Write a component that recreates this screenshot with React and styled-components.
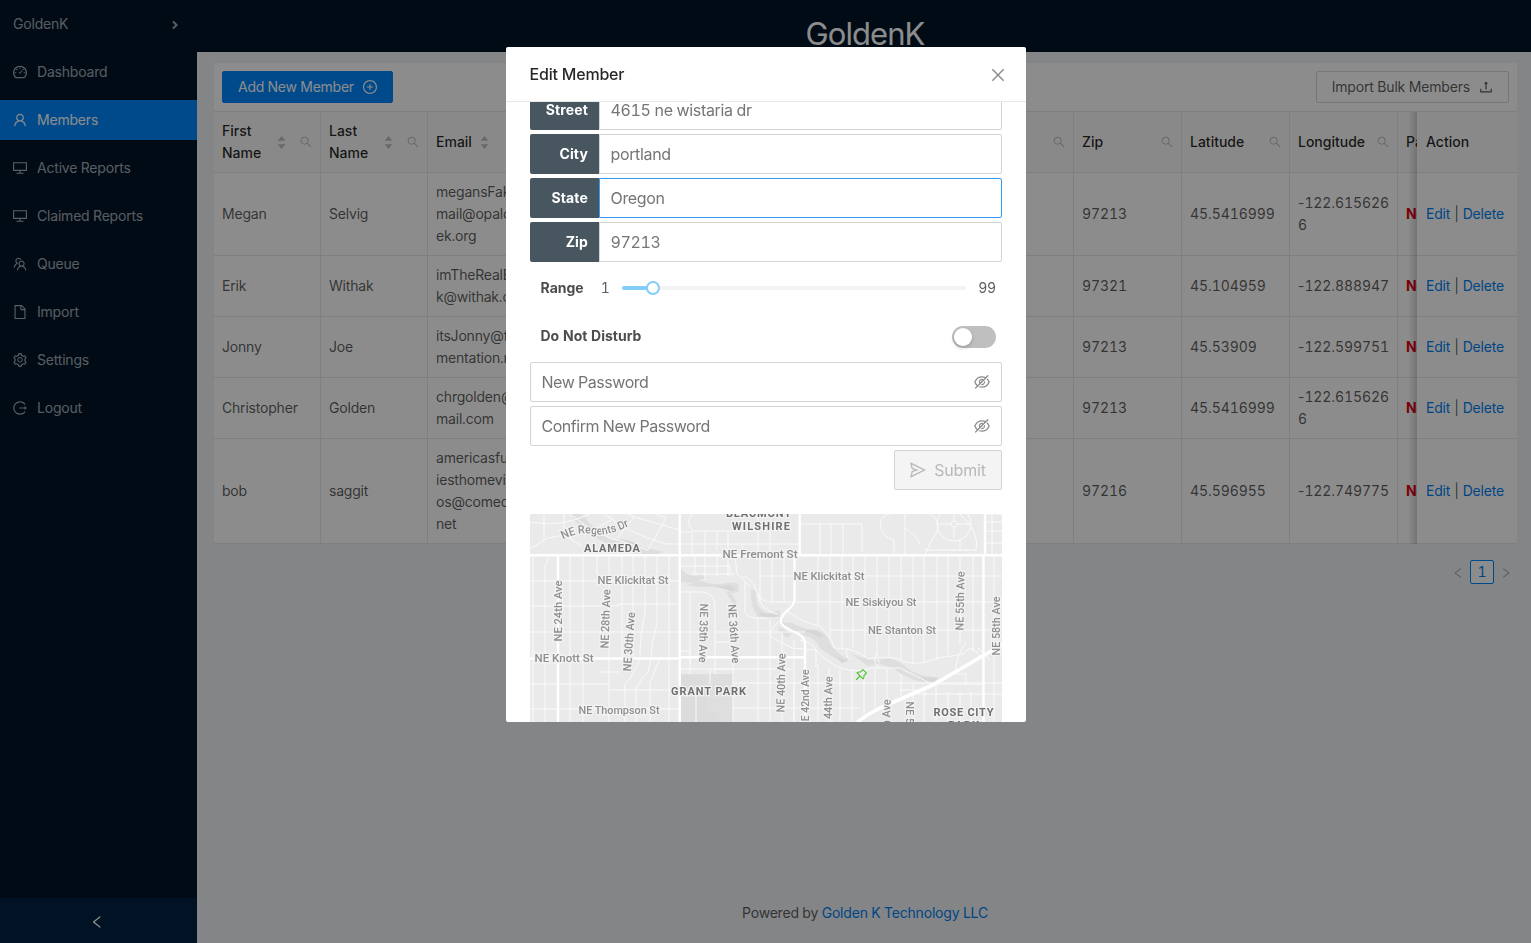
import React from 'react';
import styled, { createGlobalStyle, css } from 'styled-components';
import * as Ai from 'react-icons/ai';

const Global = createGlobalStyle`
  *, *::before, *::after { box-sizing: border-box; }
  body {
    margin: 0;
    font-family: Inter, "Liberation Sans", sans-serif;
    font-size: 14px;
    line-height: 22px;
    letter-spacing: -0.2px;
    color: rgba(0, 0, 0, 0.65);
    font-feature-settings: "tnum";
    overflow: hidden;
  }
  svg { display: block; flex: none; }
`;

/* The glyphs carry a 64 unit margin; crop it so they fill their box. */
const tight = (Glyph) => (props) => <Glyph viewBox="64 64 896 896" {...props} />;

const DashboardIcon = tight(Ai.AiOutlineDashboard);
const UserIcon = tight(Ai.AiOutlineUser);
const DesktopIcon = tight(Ai.AiOutlineDesktop);
const TeamIcon = tight(Ai.AiOutlineTeam);
const FileIcon = tight(Ai.AiOutlineFile);
const SettingIcon = tight(Ai.AiOutlineSetting);
const LogoutIcon = tight(Ai.AiOutlineLogout);
const SearchIcon = tight(Ai.AiOutlineSearch);
const PlusIcon = tight(Ai.AiOutlinePlusCircle);
const UploadIcon = tight(Ai.AiOutlineUpload);
const CloseIcon = tight(Ai.AiOutlineClose);
const HiddenIcon = tight(Ai.AiOutlineEyeInvisible);
const SendIcon = tight(Ai.AiOutlineSend);
const PinIcon = tight(Ai.AiOutlinePushpin);
const LeftIcon = tight(Ai.AiOutlineLeft);
const RightIcon = tight(Ai.AiOutlineRight);

const Page = styled.div`
  display: flex;
  width: 1531px;
  height: 943px;
  background: #f0f2f5;
`;

const Sider = styled.aside`
  display: flex;
  flex-direction: column;
  justify-content: space-between;
  width: 197px;
  background: #001529;
`;

const Menu = styled.nav`
  display: flex;
  flex-direction: column;
  gap: 8px;
  padding-top: 4px;
`;

const MenuItem = styled.a`
  display: flex;
  align-items: center;
  gap: 10px;
  height: 40px;
  padding: 0 15px 0 13px;
  color: ${(p) => (p.$active ? '#fff' : 'rgba(255, 255, 255, 0.65)')};
  background: ${(p) => (p.$active ? '#0088ff' : 'transparent')};
  svg { width: 14px; height: 14px; }
`;

const MenuTitle = styled(MenuItem)`
  justify-content: space-between;
  svg { margin-top: 2px; }
`;

const Trigger = styled.div`
  display: flex;
  align-items: center;
  justify-content: center;
  height: 45px;
  padding-top: 3px;
  padding-right: 3px;
  background: #002140;
  color: #fff;
`;

const Main = styled.div`
  display: flex;
  flex-direction: column;
  flex: 1;
  min-width: 0;
`;

const Header = styled.header`
  height: 52px;
  padding-top: 2px;
  padding-left: 2px;
  line-height: 64px;
  text-align: center;
  font-size: 31px;
  letter-spacing: -0.95px;
  color: #fff;
  background: #001529;
`;

const Content = styled.main`
  flex: 1;
  padding: 11px 14px 0 17px;
`;

const Footer = styled.footer`
  height: 41px;
  padding-left: 2px;
  text-align: center;
`;

const Link = styled.a`
  color: #0080f2;
`;

const TableCard = styled.section`
  background: #fff;
`;

const TableTitle = styled.div`
  display: flex;
  align-items: center;
  justify-content: space-between;
  height: 49px;
  padding: 0 8px;
  border-bottom: 1px solid #e8e8e8;
`;

const Button = styled.button`
  display: flex;
  align-items: center;
  gap: 9px;
  height: 32px;
  padding: 0 15px;
  font: inherit;
  letter-spacing: ${(p) => (p.$primary ? '-0.25px' : '-0.17px')};
  border-radius: 2px;
  border: 1px solid ${(p) => (p.$primary ? '#0088ff' : '#d9d9d9')};
  color: ${(p) => (p.$primary ? '#fff' : 'rgba(0, 0, 0, 0.65)')};
  background: ${(p) => (p.$primary ? '#0088ff' : '#fff')};
  svg { width: 14px; height: 14px; }
`;

const Split = styled.div`
  display: flex;
`;

const ScrollColumns = styled.div`
  width: 1203px;
  overflow: hidden;
`;

const FixedColumns = styled.div`
  position: relative;
  width: 100px;
  background: #fff;
  &::before {
    content: "";
    position: absolute;
    top: 0;
    bottom: 0;
    left: -9px;
    width: 9px;
    background: linear-gradient(to right, transparent, rgba(0, 0, 0, 0.17));
  }
`;

const Row = styled.div`
  display: grid;
  grid-template-columns: ${(p) => (p.$fixed ? '100px' : '107px 107px 108px 108px 107px 108px 107px 108px 108px 108px 108px 108px')};
  height: ${(p) => p.$height}px;
  border-bottom: 1px solid #e8e8e8;
  background: ${(p) => (p.$head ? '#fafafa' : '#fff')};
`;

const Cell = styled.div`
  display: flex;
  align-items: center;
  padding: 0 8px;
  white-space: nowrap;
  border-right: 1px solid #e8e8e8;
  ${(p) => p.$fixed && css`
    padding-left: 9px;
    border-right: none;
  `}
  ${(p) => p.$numeric && css`
    letter-spacing: -0.08px;
  `}
  ${(p) => p.$head && css`
    justify-content: space-between;
    font-weight: 500;
    letter-spacing: 0;
    color: rgba(0, 0, 0, 0.85);
  `}
  ${(p) => p.$alert && css`
    font-weight: 700;
    color: #e60012;
  `}
`;

const Sign = styled.span`
  font-feature-settings: normal;
`;

const HeadTools = styled.span`
  display: flex;
  align-items: center;
  gap: ${(p) => (p.$wide ? 25 : 13)}px;
  color: #bfbfbf;
  svg { width: 12px; height: 12px; }
`;

const Sorter = styled.span`
  display: flex;
  flex-direction: column;
  padding-top: 1px;
  && svg { width: 11px; height: 11px; }
  svg + svg { margin-top: -3.5px; }
`;

const Separator = styled.span`
  padding: 0 4px;
`;

const Pager = styled.div`
  display: flex;
  justify-content: flex-end;
  align-items: center;
  padding-top: 16px;
  margin-right: -1px;
  color: rgba(0, 0, 0, 0.3);
`;

const PagerStep = styled.span`
  display: flex;
  align-items: center;
  justify-content: center;
  width: 24px;
  height: 24px;
  padding-top: 2px;
  svg { width: 12px; height: 12px; }
`;

const PagerCurrent = styled.span`
  display: flex;
  align-items: center;
  justify-content: center;
  width: 24px;
  height: 24px;
  border: 1px solid #0088ff;
  border-radius: 2px;
  color: #0080f2;
  background: #fff;
`;

const Mask = styled.div`
  position: fixed;
  inset: 0;
  display: flex;
  justify-content: center;
  align-items: flex-start;
  padding-top: 47px;
  padding-left: 1px;
  background: rgba(0, 0, 0, 0.45);
`;

const Modal = styled.div`
  width: 520px;
  height: 675px;
  display: flex;
  flex-direction: column;
  background: #fff;
  border-radius: 2px;
  overflow: hidden;
`;

const ModalHeader = styled.div`
  display: flex;
  flex: none;
  align-items: center;
  justify-content: space-between;
  height: 55px;
  padding: 0 20px 0 23.5px;
  border-bottom: 1px solid #e8e8e8;
  font-size: 16px;
  font-weight: 500;
  color: rgba(0, 0, 0, 0.85);
  svg { width: 16px; height: 16px; margin-top: 1px; color: #8c8c8c; }
`;

const ModalBody = styled.div`
  flex: 1;
  min-height: 0;
  overflow: hidden;
  padding: 0 24px;
`;

const Form = styled.div`
  display: flex;
  flex-direction: column;
  gap: 4px;
  margin-top: -12px;
`;

const Field = styled.label`
  display: flex;
  height: 40px;
`;

const FieldLabel = styled.span`
  display: flex;
  align-items: center;
  justify-content: flex-end;
  width: 69px;
  padding-right: 11px;
  font-weight: 700;
  letter-spacing: 0.15px;
  color: #fff;
  background: #48565f;
  border-radius: 2px 0 0 2px;
`;

const FieldBox = styled.span`
  display: flex;
  align-items: center;
  justify-content: space-between;
  flex: 1;
  padding: 0 11px 0 10.5px;
  font-size: 16px;
  letter-spacing: ${(p) => (p.$plain ? '-0.47px' : '-0.35px')};
  color: #757575;
  border: 1px solid ${(p) => (p.$focused ? '#3399f3' : '#d4d4d4')};
  border-radius: ${(p) => (p.$plain ? '2px' : '0 2px 2px 0')};
  svg { width: 16px; height: 16px; color: #8c8c8c; }
`;

const OptionRow = styled.div`
  display: flex;
  align-items: center;
  height: ${(p) => p.$height}px;
  padding: 0 6px 0 10.5px;
  strong { color: #4d4d4d; letter-spacing: 0; }
`;

const RangeMin = styled.span`
  padding-left: 17px;
  width: 38px;
`;

const RangeMax = styled.span`
  padding-left: 12px;
`;

const Track = styled.div`
  position: relative;
  flex: 1;
  height: 4px;
  border-radius: 2px;
  background: #f3f3f3;
`;

const TrackFill = styled.div`
  width: 31px;
  height: 4px;
  border-radius: 2px;
  background: #83cdfb;
`;

const Handle = styled.span`
  position: absolute;
  top: -5px;
  left: 24px;
  width: 14px;
  height: 14px;
  border: 2px solid #83cdfb;
  border-radius: 50%;
  background: #fff;
`;

const Switch = styled.span`
  display: flex;
  width: 44px;
  height: 22px;
  margin-left: auto;
  margin-top: 1px;
  padding: 2px;
  border-radius: 11px;
  background: #bfbfbf;
  &::before {
    content: "";
    width: 18px;
    height: 18px;
    border-radius: 50%;
    background: #fff;
    box-shadow: 0 2px 4px rgba(0, 35, 11, 0.2);
  }
`;

const Submit = styled.button`
  display: flex;
  align-items: center;
  justify-content: center;
  align-self: flex-end;
  gap: 8px;
  width: 108px;
  height: 40px;
  padding: 0;
  font: inherit;
  font-size: 16px;
  letter-spacing: -0.2px;
  color: #b8b8b8;
  background: #f4f4f4;
  border: 1px solid #d4d4d4;
  border-radius: 2px;
  svg { width: 16px; height: 16px; }
`;

const MapFrame = styled.div`
  margin-top: 24px;
  height: 208px;
  background: #eaeaea;
  letter-spacing: 0;
`;

const MapSvg = styled.svg`
  .minor { stroke: #fafafa; stroke-width: 1; fill: none; }
  .major { stroke: #fff; stroke-width: 2.4; fill: none; stroke-linejoin: round; }
  .highway { stroke: #fff; stroke-width: 3.6; fill: none; }
  .park { fill: #dedede; }
  .shade { fill: #d6d6d6; }
`;

const StreetLabel = styled.text`
  font: 500 11.5px Roboto, "Liberation Sans", sans-serif;
  fill: #8f8f8f;
  stroke: #f3f3f3;
  stroke-width: 2.5px;
  paint-order: stroke;
  text-anchor: ${(p) => p.$anchor || 'middle'};
`;

const AreaLabel = styled.text`
  font: 700 11px Roboto, "Liberation Sans", sans-serif;
  fill: #707070;
  stroke: #f3f3f3;
  stroke-width: 2.5px;
  paint-order: stroke;
  text-anchor: middle;
`;

const menu = [
  ['Dashboard', DashboardIcon],
  ['Members', UserIcon],
  ['Active Reports', DesktopIcon],
  ['Claimed Reports', DesktopIcon],
  ['Queue', TeamIcon],
  ['Import', FileIcon],
  ['Settings', SettingIcon],
  ['Logout', LogoutIcon],
];

const columns = [
  { lines: ['First', 'Name'], sort: true, search: true },
  { lines: ['Last', 'Name'], sort: true, search: true },
  { lines: ['Email'], sort: true, search: true, wide: true },
  { lines: ['Phone'], search: true },
  { lines: ['Mobile'], search: true },
  { lines: ['Street'], search: true },
  { lines: ['City'], search: true },
  { lines: ['State'], sort: true, search: true, wide: true },
  { lines: ['Zip'], search: true },
  { lines: ['Latitude'], search: true },
  { lines: ['Longitude'], search: true },
  { lines: ['Paid'] },
];

const members = [
  { first: 'Megan', last: 'Selvig', email: ['megansFakeE', 'mail@opalcre', 'ek.org'], zip: '97213', lat: '45.5416999', lng: ['122.615626', '6'], height: 83 },
  { first: 'Erik', last: 'Withak', email: ['imTheRealEri', 'k@withak.com'], zip: '97321', lat: '45.104959', lng: ['122.888947'], height: 61 },
  { first: 'Jonny', last: 'Joe', email: ['itsJonny@fer', 'mentation.net'], zip: '97213', lat: '45.53909', lng: ['122.599751'], height: 61 },
  { first: 'Christopher', last: 'Golden', email: ['chrgolden@g', 'mail.com'], zip: '97213', lat: '45.5416999', lng: ['122.615626', '6'], height: 61 },
  { first: 'bob', last: 'saggit', email: ['americasfunn', 'iesthomevide', 'os@comedy.', 'net'], zip: '97216', lat: '45.596955', lng: ['122.749775'], height: 105 },
];

const fields = [
  ['Street', '4615 ne wistaria dr'],
  ['City', 'portland'],
  ['State', 'Oregon'],
  ['Zip', '97213'],
];

function Lines({ of, sign }) {
  return (
    <span>
      {sign && <Sign>{sign}</Sign>}
      {of.map((l, i) => <React.Fragment key={i}>{i > 0 && <br />}{l}</React.Fragment>)}
    </span>
  );
}

function MembersTable() {
  return (
    <TableCard>
      <TableTitle>
        <Button $primary>Add New Member <PlusIcon /></Button>
        <Button>Import Bulk Members <UploadIcon /></Button>
      </TableTitle>
      <Split>
        <ScrollColumns>
          <Row $head $height={61}>
            {columns.map((c, i) => (
              <Cell $head key={i}>
                <Lines of={c.lines} />
                <HeadTools $wide={c.wide}>
                  {c.sort && <Sorter><Ai.AiFillCaretUp /><Ai.AiFillCaretDown /></Sorter>}
                  {c.search && <SearchIcon />}
                </HeadTools>
              </Cell>
            ))}
          </Row>
          {members.map((m) => (
            <Row $height={m.height} key={m.first}>
              <Cell>{m.first}</Cell>
              <Cell>{m.last}</Cell>
              <Cell><Lines of={m.email} /></Cell>
              <Cell /><Cell /><Cell /><Cell /><Cell />
              <Cell $numeric>{m.zip}</Cell>
              <Cell $numeric>{m.lat}</Cell>
              <Cell $numeric><Lines sign="-" of={m.lng} /></Cell>
              <Cell $alert>No</Cell>
            </Row>
          ))}
        </ScrollColumns>
        <FixedColumns>
          <Row $fixed $head $height={61}><Cell $head $fixed>Action</Cell></Row>
          {members.map((m) => (
            <Row $fixed $height={m.height} key={m.first}>
              <Cell $fixed><Link>Edit</Link><Separator>|</Separator><Link>Delete</Link></Cell>
            </Row>
          ))}
        </FixedColumns>
      </Split>
    </TableCard>
  );
}

const minorRoads = [
  // west side
  'M15 52V208 M15 52L19 44 M40 41V208 M53 41V208 M67 41V60 M79 41V208 M92 41V144 M103 41V144 M115 41V99Q110 120 110 144',
  'M127 41V110Q121 128 121 144 M139 41V208 M3 41V208',
  'M0 67H150 M0 92H88V90H150 M0 118H150 M0 170H79 M0 195H150 M79 176H150 M70 158H89',
  'M110 144Q102 165 95 170V208 M121 144L118 158Q108 168 106 176V208 M130 144L120 168V208',
  'M0 35L18 24L34 21V0 M14 0V25 M0 8Q30 14 60 0 M34 21L52 32',
  'M40 0Q70 24 94 28L118 36L136 4L126 0 M75 0Q95 18 136 30H150 M88 24L104 3L98 0 M104 3L150 16 M60 18L84 4',
  // centre
  'M150 18H162V41 M162 0Q155 10 163 17H230 M175 18V41 M187 18V36 M198 18V41 M212 30V41 M228 0V41 M240 16V41 M150 30H270',
  'M165 41V60 M175 41V66 M187 41V62 M198 41V62 M205 41L207 60L220 72 M150 52H200V60 M162 60H204',
  'M160 78V160 M173 78Q185 80 185 92V160 M150 78H175 M203 98V208 M215 68V98Q218 104 228 104H250 M228 104V208 M240 106V208 M252 118V208 M264 126V208',
  'M150 118H172 M185 118H275 M185 128H203 M150 155H264 M185 155H203 M203 169H472 M203 194H275 M166 178V208 M180 155V170 M150 137H160V150',
  'M229 62H472 M228 80Q232 88 240 88H472 M300 116H472 M254 41V88 M242 41V88 M230 41V88 M212 63Q220 60 228 80Q230 97 248 100',
  // parkway along the ravine
  'M256 96Q270 108 290 112Q302 124 304 134Q326 134 338 145Q360 140 376 148Q390 152 408 144L434 140Q440 128 450 142',
  'M248 108Q236 120 243 124L262 134L286 136Q294 146 306 152Q322 160 342 154H370Q390 164 402 170 M270 126Q285 130 286 136V153',
  'M318 134Q314 140 320 146 M346 140Q342 150 350 154 M402 170H452 M436 128Q424 146 426 160H436V170 M448 134L460 146',
  // east side
  'M270 10H332V38 M290 10V41 M301 10V41 M313 10V41 M350 10Q352 0 360 0 M350 10Q352 24 364 26V41 M375 0V41 M375 14Q385 20 390 30 M400 0Q412 6 406 20Q400 28 395 40 M430 0Q450 18 446 36H395 M430 26V36',
  'M424 0V7 M424 13V24 M406 10H421 M427 10H442 M456 0H472 M456 8H472 M456 17H472 M456 29H472 M462 0V41',
  'M288 41V112 M300 41V124 M312 41V134 M323 41V134 M335 41V142 M347 41V142 M359 41V142 M371 41V145 M383 41V150 M394 41V148 M407 41V146 M418 41V143 M430 41V130 M443 41V138 M464 41V128',
  'M288 150V208 M299 155V208 M310 155V208 M322 155V208 M334 155V200 M345 155V195 M357 155V190 M371 160V182 M383 169V208 M394 178V208 M406 169V208 M418 178V208 M430 178V208 M441 178V208 M464 134V208',
  'M380 180H472 M360 190L380 180 M275 194H330 M370 176H395V182 M264 168V208',
];

const majorRoads = [
  'M0 41.2H472', 'M149.7 0V208', 'M28 41V208', 'M0 144.5H148L152 143.2H275',
  'M269.7 0V41', 'M264.5 41V86Q264 91 258 96Q249 104 251 109Q254 114 267 119Q275 123 275 130V208',
  'M455 0V41', 'M453.5 41V208',
];

const streets = [
  ['NE Fremont St', 230, 44, 0, 75], ['NE Klickitat St', 103, 70, 0, 71], ['NE Klickitat St', 299, 66, 0, 71],
  ['NE Siskiyou St', 351, 92, 0, 71], ['NE Stanton St', 372, 120, 0, 68], ['NE Knott St', 34, 148, 0, 59],
  ['NE Thompson St', 89, 199.5, 0, 81], ['NE 24th Ave', 32, 97, -90, 61], ['NE 28th Ave', 79.5, 105, -88, 59],
  ['NE 30th Ave', 103, 128, -86, 59], ['NE 35th Ave', 169.5, 119, 91, 59], ['NE 36th Ave', 200, 120, 86, 59],
  ['NE 40th Ave', 255, 169, -89, 59], ['NE 42nd Ave', 279, 185, -90, 59], ['NE 44th Ave', 302, 192, -89, 59],
  ['NE 47th Ave', 360, 215, -89, 59], ['NE 55th Ave', 434, 87, -89, 59], ['NE 58th Ave', 469.5, 112, -90, 59],
  ['NE 50th Ave', 376, 217, 90, 59],
];

function StreetMap() {
  return (
    <MapFrame>
      <MapSvg width="472" height="208" viewBox="0 0 472 208">
        <defs>
          <path id="regents" d="M33 25.5Q48 17.5 62 20Q78 23 101 11" />
        </defs>
        <path className="park" d="M40 0L52 0Q64 18 84 26Q100 23 108 32L134 38L128 40H104L74 28Q54 20 40 0Z M151 160H203V208H151Z" />
        <path className="park" d="M151 54Q156 64 170 61L178 64L168 66Q184 72 198 69Q212 66 208 78L202 79Q192 71 168 73L156 71L164 69L151 68Z M221 75L226 77Q224 95 238 99L250 96V106L228 103Q220 92 221 75Z" />
        <path className="park" d="M250 108L262 109Q270 113 278 115Q292 114 298 124Q302 138 320 146L313 148Q300 142 290 134Q285 124 276 122L262 116Z M320 139Q330 144 346 146L350 150L338 152Z M350 146Q362 142 372 150Q388 164 408 163L402 169Q380 168 366 156L350 150Z M248 113L262 119L258 124L250 119Z M196 78L204 92L208 90L200 78Z" />
        <path className="shade" d="M175 172L178 196L188 200V208H151V162Q168 158 175 172Z" opacity=".3" />
        <path className="shade" d="M82 26L104 28L112 33L94 29Z M274 117Q288 115 294 122L290 124Q284 119 274 117Z M170 70Q184 74 200 71L206 76L200 77Q188 72 170 70Z M390 163L408 164L404 168L390 166Z M306 143L318 147L312 149Z M228 99L248 101L244 104L232 102Z" />
        {minorRoads.map((d) => <path className="minor" d={d} key={d} />)}
        <circle className="minor" cx="424" cy="10" r="17" />
        <circle className="minor" cx="424" cy="10" r="3" />
        {majorRoads.map((d) => <path className="major" d={d} key={d} />)}
        <path className="highway" d="M324 211Q334 202 350 194L403 171L463 136L474 130" />
        {streets.map(([name, x, y, angle, length]) => (
          <StreetLabel key={name + x} x={x} y={y} textLength={length} lengthAdjust="spacingAndGlyphs" transform={`rotate(${angle} ${x} ${y})`}>{name}</StreetLabel>
        ))}
        <StreetLabel $anchor="start"><textPath href="#regents" textLength="69" lengthAdjust="spacingAndGlyphs">NE Regents Dr</textPath></StreetLabel>
        <AreaLabel x="82" y="38.3" textLength="56">ALAMEDA</AreaLabel>
        <AreaLabel x="228.5" y="2.8" textLength="65">BEAUMONT</AreaLabel>
        <AreaLabel x="231" y="15.5" textLength="58">WILSHIRE</AreaLabel>
        <AreaLabel x="178.5" y="181" textLength="75">GRANT PARK</AreaLabel>
        <AreaLabel x="433.5" y="202" textLength="60">ROSE CITY</AreaLabel>
        <AreaLabel x="433.5" y="215" textLength="31">PARK</AreaLabel>
        <PinIcon x="325" y="154" width="13" height="13" size={13} color="#3fc11f" />
      </MapSvg>
    </MapFrame>
  );
}

function EditMember() {
  return (
    <Mask>
      <Modal>
        <ModalHeader>Edit Member <CloseIcon /></ModalHeader>
        <ModalBody>
          <Form>
            {fields.map(([label, value]) => (
              <Field key={label}>
                <FieldLabel>{label}</FieldLabel>
                <FieldBox $focused={label === 'State'}>{value}</FieldBox>
              </Field>
            ))}
            <OptionRow $height={44}>
              <strong>Range</strong>
              <RangeMin>1</RangeMin>
              <Track><TrackFill /><Handle /></Track>
              <RangeMax>99</RangeMax>
            </OptionRow>
            <OptionRow $height={44}><strong>Do Not Disturb</strong><Switch /></OptionRow>
            <Field><FieldBox $plain>New Password <HiddenIcon /></FieldBox></Field>
            <Field><FieldBox $plain>Confirm New Password <HiddenIcon /></FieldBox></Field>
            <Submit><SendIcon /> Submit</Submit>
          </Form>
          <StreetMap />
        </ModalBody>
      </Modal>
    </Mask>
  );
}

export default function App() {
  return (
    <>
      <Global />
      <Page>
        <Sider>
          <Menu>
            <MenuTitle>
              GoldenK
              <svg viewBox="0 0 14 14" fill="none" stroke="currentColor" strokeWidth="2"><path d="M4.9 3.4L8.6 7L4.9 10.6" /></svg>
            </MenuTitle>
            {menu.map(([label, Icon]) => (
              <MenuItem key={label} $active={label === 'Members'}><Icon />{label}</MenuItem>
            ))}
          </Menu>
          <Trigger><LeftIcon /></Trigger>
        </Sider>
        <Main>
          <Header>GoldenK</Header>
          <Content>
            <MembersTable />
            <Pager>
              <PagerStep><LeftIcon /></PagerStep>
              <PagerCurrent>1</PagerCurrent>
              <PagerStep><RightIcon /></PagerStep>
            </Pager>
          </Content>
          <Footer>Powered by <Link>Golden K Technology LLC</Link></Footer>
        </Main>
      </Page>
      <EditMember />
    </>
  );
}
